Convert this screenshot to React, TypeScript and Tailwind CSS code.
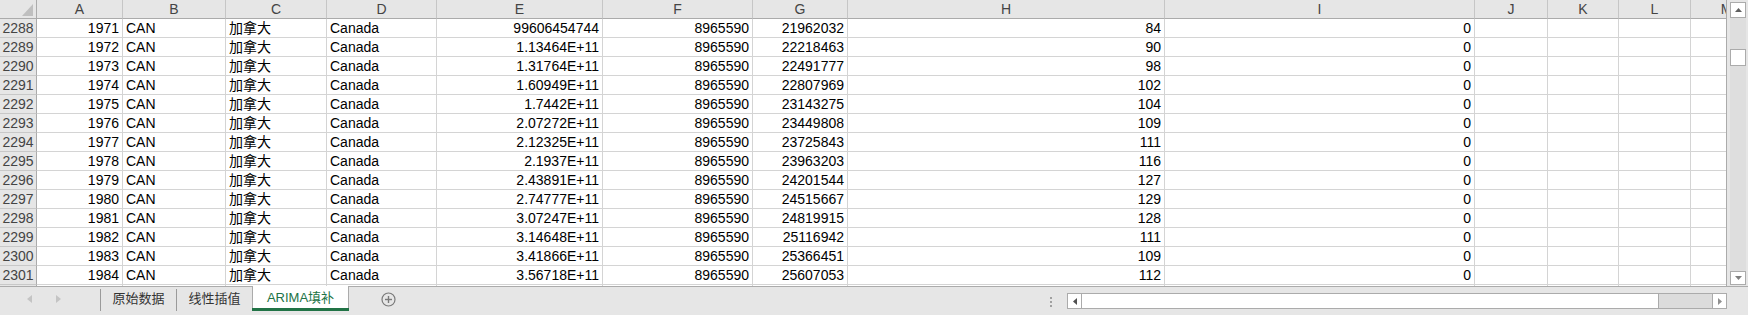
import React from "react";

const cols: { k: string; w: string; align: "l" | "r" }[] = [
  { k: "A", w: "w-[86px]", align: "r" },
  { k: "B", w: "w-[103px]", align: "l" },
  { k: "C", w: "w-[101px]", align: "l" },
  { k: "D", w: "w-[110px]", align: "l" },
  { k: "E", w: "w-[166px]", align: "r" },
  { k: "F", w: "w-[150px]", align: "r" },
  { k: "G", w: "w-[95px]", align: "r" },
  { k: "H", w: "w-[317px]", align: "r" },
  { k: "I", w: "w-[310px]", align: "r" },
  { k: "J", w: "w-[73px]", align: "r" },
  { k: "K", w: "w-[71px]", align: "r" },
  { k: "L", w: "w-[72px]", align: "r" },
  { k: "M", w: "w-[72px]", align: "r" },
];

const data: [string, string, string, string, string][] = [
  ["2288", "1971", "99606454744", "21962032", "84"],
  ["2289", "1972", "1.13464E+11", "22218463", "90"],
  ["2290", "1973", "1.31764E+11", "22491777", "98"],
  ["2291", "1974", "1.60949E+11", "22807969", "102"],
  ["2292", "1975", "1.7442E+11", "23143275", "104"],
  ["2293", "1976", "2.07272E+11", "23449808", "109"],
  ["2294", "1977", "2.12325E+11", "23725843", "111"],
  ["2295", "1978", "2.1937E+11", "23963203", "116"],
  ["2296", "1979", "2.43891E+11", "24201544", "127"],
  ["2297", "1980", "2.74777E+11", "24515667", "129"],
  ["2298", "1981", "3.07247E+11", "24819915", "128"],
  ["2299", "1982", "3.14648E+11", "25116942", "111"],
  ["2300", "1983", "3.41866E+11", "25366451", "109"],
  ["2301", "1984", "3.56718E+11", "25607053", "112"],
];

const font = { fontFamily: "'Liberation Sans', 'Noto Sans CJK SC', Arial, sans-serif" };

function Row({ r }: { r: [string, string, string, string, string] }) {
  const vals = [r[1], "CAN", "加拿大", "Canada", r[2], "8965590", r[3], r[4], "0", "", "", "", ""];
  return (
    <div className="flex h-[19px] shrink-0">
      <div className="w-[37px] shrink-0 h-[19px] bg-[#e6e6e6] border-r border-b border-r-[#ababab] border-b-[#c8c8c8] text-[#444] text-[14px] leading-[18px] text-center">
        {r[0]}
      </div>
      {cols.map((c, i) => (
        <div
          key={c.k}
          className={`${c.w} shrink-0 h-[19px] border-r border-b border-[#d4d4d4] text-[14px] leading-[18px] text-black px-[3px] whitespace-nowrap overflow-hidden ${
            c.align === "r" ? "text-right" : "text-left"
          }`}
        >
          {vals[i]}
        </div>
      ))}
    </div>
  );
}

export default function App() {
  return (
    <div className="w-[1748px] h-[315px] bg-white overflow-hidden flex flex-col" style={font}>
      <div className="flex h-[287px] shrink-0 border-b border-[#ababab]">
        <div className="w-[1727px] shrink-0 overflow-hidden flex flex-col border-r border-[#ababab] h-[286px]">
          {/* header */}
          <div className="flex h-[19px] shrink-0 bg-[#e6e6e6]">
            <div className="w-[37px] shrink-0 h-[19px] border-r border-b border-[#ababab] flex items-end justify-end pr-[3px] pb-[2px]">
              <svg width="11" height="12" viewBox="0 0 11 12">
                <polygon points="11,0 11,12 0,12" fill="#bfbfbf" />
              </svg>
            </div>
            {cols.map((c) => (
              <div
                key={c.k}
                className={`${c.w} shrink-0 h-[19px] border-r border-b border-r-[#c6c6c6] border-b-[#ababab] text-[14px] leading-[18px] text-center text-[#444]`}
              >
                {c.k}
              </div>
            ))}
          </div>
          {data.map((r) => (
            <Row key={r[0]} r={r} />
          ))}
          <div className="flex h-[2px] shrink-0">
            <div className="w-[37px] shrink-0 bg-[#e6e6e6] border-r border-[#ababab]" />
            {cols.map((c) => (
              <div key={c.k} className={`${c.w} shrink-0 border-r border-[#d4d4d4]`} />
            ))}
          </div>
        </div>
        {/* vertical scrollbar */}
        <div className="flex-1 bg-[#e6e6e6] flex flex-col pl-[3px] pr-[2px] pt-[2px] pb-[1px]">
          <div className="h-[16px] bg-white border border-[#ababab] flex items-center justify-center">
            <svg width="7" height="4" viewBox="0 0 7 4">
              <polygon points="0,4 7,4 3.5,0" fill="#606060" />
            </svg>
          </div>
          <div className="flex-1 bg-[#dedede] pt-[31px] flex flex-col">
            <div className="h-[17px] bg-white border border-[#ababab]" />
            <div className="flex-1" />
          </div>
          <div className="h-[14px] bg-white border border-[#ababab] flex items-center justify-center">
            <svg width="7" height="4" viewBox="0 0 7 4">
              <polygon points="0,0 7,0 3.5,4" fill="#808080" />
            </svg>
          </div>
        </div>
      </div>
      {/* sheet tabs bar */}
      <div className="flex-1 bg-[#e6e6e6] flex items-start">
        <div className="flex items-center h-[24px] w-[100px] shrink-0 pl-[27px] gap-[24px]">
          <svg width="5" height="8" viewBox="0 0 5 8">
            <polygon points="5,0 5,8 0,4" fill="#c4c4c4" />
          </svg>
          <svg width="5" height="8" viewBox="0 0 5 8">
            <polygon points="0,0 0,8 5,4" fill="#c4c4c4" />
          </svg>
        </div>
        <div className="w-px h-[22px] mt-[2px] bg-[#9a9a9a] shrink-0" />
        <div className="w-[75px] h-[24px] shrink-0 flex items-center justify-center text-[13px] text-[#333]">原始数据</div>
        <div className="w-px h-[22px] mt-[2px] bg-[#9a9a9a] shrink-0" />
        <div className="w-[75px] h-[24px] shrink-0 flex items-center justify-center text-[13px] text-[#333]">线性插值</div>
        <div className="w-[97px] h-[25px] shrink-0 -mt-px bg-white border-l border-r border-[#ababab] flex flex-col">
          <div className="flex-1 flex items-center justify-center text-[13px] text-[#217346] pt-px">ARIMA填补</div>
          <div className="h-[3px] bg-[#217346] -mx-px" />
        </div>
        <div className="ml-[32px] h-[24px] flex items-center">
          <svg width="15" height="15" viewBox="0 0 15 15">
            <circle cx="7.5" cy="7.5" r="6.5" fill="none" stroke="#7a7a7a" strokeWidth="1.2" />
            <line x1="7.5" y1="4" x2="7.5" y2="11" stroke="#7a7a7a" strokeWidth="1.4" />
            <line x1="4" y1="7.5" x2="11" y2="7.5" stroke="#7a7a7a" strokeWidth="1.4" />
          </svg>
        </div>
        <div className="ml-auto h-[24px] flex items-center">
          <div className="flex flex-col gap-[2px] mt-[6px]">
            <div className="w-[2px] h-[2px] bg-[#a0a0a0]" />
            <div className="w-[2px] h-[2px] bg-[#a0a0a0]" />
            <div className="w-[2px] h-[2px] bg-[#a0a0a0]" />
          </div>
        </div>
        <div className="ml-[15px] mr-[21px] mt-[6px] w-[660px] h-[16px] flex border border-[#ababab] bg-[#dcdcdc]">
          <div className="w-[14px] h-full bg-white border-r border-[#ababab] flex items-center justify-center">
            <svg width="4" height="7" viewBox="0 0 4 7">
              <polygon points="4,0 4,7 0,3.5" fill="#505050" />
            </svg>
          </div>
          <div className="w-[577px] h-full bg-white border-r border-[#ababab]" />
          <div className="flex-1" />
          <div className="w-[14px] h-full bg-white border-l border-[#ababab] flex items-center justify-center">
            <svg width="4" height="7" viewBox="0 0 4 7">
              <polygon points="0,0 0,7 4,3.5" fill="#909090" />
            </svg>
          </div>
        </div>
      </div>
    </div>
  );
}
